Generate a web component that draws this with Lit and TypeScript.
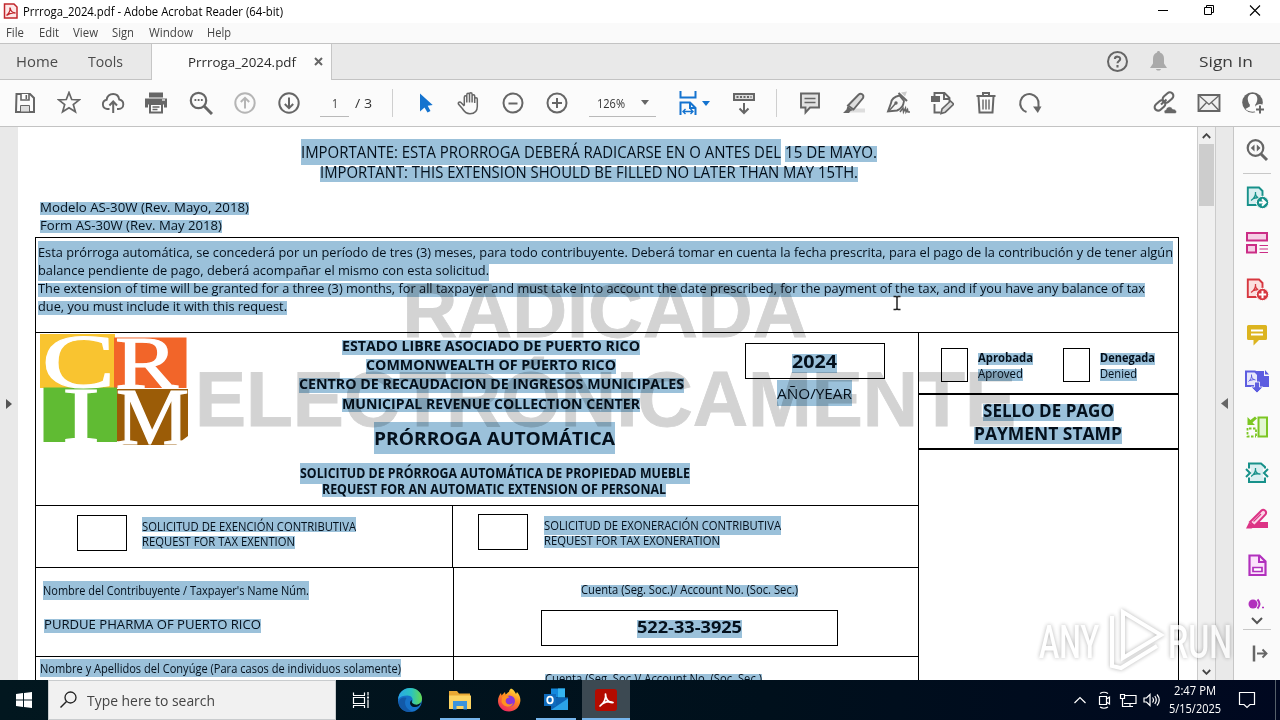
import { LitElement, html, svg, css } from "lit";
import { customElement } from "lit/decorators.js";
import { styleMap } from "lit/directives/style-map.js";

/** One line of text: page position, box size, baseline, font size, text. */
interface Line {
  x: number; y: number; w: number; h: number; b: number; s: number; t: string; bold?: boolean;
}
const L = (x: number, y: number, w: number, h: number, b: number, s: number, t: string, bold = false): Line =>
  ({ x, y, w, h, b, s, t, bold });

/** Text set to an exact width inside its own box. */
const fit = (w: number, h: number, base: number, size: number, text: string, cls = "") => html`
  <svg class="fit ${cls}" width=${w} height=${h}><text x="0" y=${base} font-size=${size} textLength=${w}
    lengthAdjust="spacingAndGlyphs">${text}</text></svg>`;

const run = (l: Line) => html`<div class="run">${fit(l.w, l.h, l.b - l.y, l.s, l.t, l.bold ? "bold" : "")}</div>`;

/** Lines flowing down a cell whose content box starts at (ox, oy). */
const stack = (ox: number, oy: number, lines: Line[]) => {
  let bottom = oy;
  return lines.map((l) => {
    const style = { marginLeft: `${l.x - ox}px`, marginTop: `${l.y - bottom}px`, width: `${l.w}px` };
    bottom = l.y + l.h;
    return html`<div style=${styleMap(style)}>${run(l)}</div>`;
  });
};

const icon = (body: unknown, size = 24) =>
  html`<svg class="icon" width=${size} height=${size} viewBox="0 0 ${size} ${size}">${body}</svg>`;

const G = "#666";
const I = {
  save: svg`<path d="M3.5 3H17l4 4v14H3z" fill="none" stroke="#666" stroke-width="2"/><path d="M8 3v6h8V3" fill="#fff" stroke="#666" stroke-width="1.6"/><path d="M12.5 4h1.6v4h-1.6z" fill="#666"/><path d="M7.5 14.5h9V21h-9z" fill="#ddd" stroke="#666" stroke-width="1"/>`,
  star: svg`<path d="M12 1.5l2.7 7 7.6.3-6 4.7 2.1 7.3L12 16.700l-6.400 4.100 2.100-7.300-6-4.700 7.600-.3z" fill="none" stroke="#666" stroke-width="1.700"/>`,
  cloud: svg`<path d="M8.500 18H6.200a4.700 4.700 0 0 1-.5-9.300C6.200 5 9 3 12.200 3c3.400 0 5.600 2.400 6 5.500 2.500.5 4.100 2.300 4.100 4.700 0 2.800-2 4.800-4.600 4.800H16" fill="none" stroke="#666" stroke-width="1.900"/><path d="M12.200 22V11M8.400 14.500l3.800-4 3.800 4" fill="none" stroke="#666" stroke-width="2"/>`,
  print: svg`<g transform="translate(-1 -.5)"><path d="M5 2h14v5H5zM1 8h22v9h-3v-3H4v3H1z" fill="#666"/><path d="M6 13.500h12V22H6z" fill="#fff" stroke="#666" stroke-width="2"/><path d="M8.500 16.500h7M8.500 19h5" stroke="#666" stroke-width="1.300"/><path d="M18 9.500h3" stroke="#fff" stroke-width="1.200"/></g>`,
  find: svg`<circle cx="9.500" cy="9.500" r="7.700" fill="none" stroke="#666" stroke-width="2.200"/><path d="M15 15l8 8" stroke="#666" stroke-width="3"/><path d="M5.500 9h1.800M8.700 9h1.800M11.900 9h1.800" stroke="#666" stroke-width="1.800"/>`,
  up: svg`<g fill="none" stroke="#b5b5b5" stroke-width="2"><circle cx="12" cy="12" r="9.700"/><path d="M12 17.500V7M7.800 11L12 6.800l4.200 4.200"/></g>`,
  down: svg`<g fill="none" stroke="#666" stroke-width="2"><circle cx="12" cy="12" r="9.700"/><path d="M12 6.500V17M7.800 13l4.200 4.200 4.200-4.200"/></g>`,
  pointer: svg`<path d="M7 2.500v18l4.500-4 3 5 3-1.500-2.800-5.300 5-.7z" fill="#1473cf"/>`,
  hand: svg`<path d="M7.300 14.500V6.300c0-2 2.500-2 2.500 0V4c0-2.300 2.700-2.300 2.700 0v-.7c0-2 2.600-2 2.600 0V5c0-1.800 2.600-1.800 2.600 0v3c0-1.700 2.600-1.700 2.600 0v7.500c0 4.500-2.500 7.200-7.300 7.200-4 0-5.800-2-7.700-5.200L1.600 13.300c-1-1.900 1.200-3 2.600-1.600l3.100 3.200M9.800 6v5.500M12.500 4v7.500M15.100 5v6.500M17.700 8v4" fill="none" stroke="#666" stroke-width="1.500"/>`,
  minus: svg`<g fill="none" stroke="#666" stroke-width="2"><circle cx="12" cy="12" r="9.500"/><path d="M7.500 12.500h9"/></g>`,
  plus: svg`<g fill="none" stroke="#666" stroke-width="2"><circle cx="12" cy="12" r="9.500"/><path d="M7 12h10M12 7v10"/></g>`,
  fitw: svg`<g fill="none" stroke="#1473cf" stroke-width="2"><path d="M4.500 0v6.500h15V0M4.500 24V11.500h9.500l5.500 5.500V24M14 11.500V17h5"/><path d="M7 20.500h10M9.500 18l-2.500 2.500L9.500 23M14.500 18l2.500 2.500-2.500 2.500" stroke-width="1.400"/></g>`,
  scroll: svg`<path d="M2 3H22V9H2z" fill="#ddd" stroke="#666" stroke-width="2"/><path d="M4.500 6h15" stroke="#666" stroke-width="2" stroke-dasharray="2 1.500"/><path d="M12 12v10M7.500 17.500l4.500 4.500 4.500-4.500" fill="none" stroke="#666" stroke-width="2"/>`,
  comment: svg`<path d="M3 2.500h18v14h-9l-4.500 5v-5H3z" fill="#e2e2e2" stroke="#666" stroke-width="1.900"/><path d="M6.500 7.500h11M6.500 11.500h11" stroke="#666" stroke-width="1.500"/>`,
  marker: svg`<path d="M8 17.500h15v4H4z" fill="#ddd"/><path d="M5.500 15l-1 3.500L1 22h6l1.500-2 2.500-.8z" fill="#666"/><path d="M6 14.500L16.500 3.800c2.300-2.200 6-.2 4.500 3.300L11.500 18.500z" fill="#ddd" stroke="#666" stroke-width="1.900"/>`,
  sign: svg`<path d="M15 1.500l6-1-2 5z" fill="#ccc"/><path d="M12.500 2l8.500 8" stroke="#666" stroke-width="2"/><path d="M13.500 4.500c-5 1-8 3-8.500 7.500L2 20.500l9-1c4-1.500 6.500-5 7-9.500z" fill="#f6f6f6" stroke="#666" stroke-width="1.900"/><path d="M2.500 20.500l7-8" stroke="#666" stroke-width="1.500"/><circle cx="10" cy="12" r="1.700" fill="#666"/><path d="M14 21l3-4 .5 4 2-4 .5 4 1.500-2.500.5 2.500h2" fill="none" stroke="#666" stroke-width="1.500"/>`,
  edit: svg`<path d="M1 5h9v6H1z" fill="#666"/><path d="M4.500 5V2h10l5 5v4M4.500 13v8.500h6M14 2v6h5" fill="none" stroke="#666" stroke-width="1.900"/><path d="M11 22.500l1-4.500 8.500-8 3.300 3.200-8.500 8z" fill="#ddd" stroke="#666" stroke-width="1.600"/>`,
  trash: svg`<path d="M2.500 5h19M9 5V2h6v3M4.500 5.500l1 16h13l1-16" fill="none" stroke="#666" stroke-width="2"/><path d="M9 8.500v10M12 8.500v10M15 8.500v10" stroke="#666" stroke-width="1.400"/>`,
  rotate: svg`<path d="M8.500 21A9.200 9.200 0 1 1 20.500 13.500v4" fill="none" stroke="#666" stroke-width="2"/><path d="M15 15.500h8.500l-3.700 6.500z" fill="#666"/>`,
  link: svg`<g fill="none" stroke="#666" stroke-width="2.100"><rect x="9" y="3" width="12" height="7" rx="3.500" transform="rotate(-42 15 6.500)"/><rect x="1" y="11" width="12" height="7" rx="3.500" transform="rotate(-42 7 14.500)"/><path d="M8 13.500l5.500-5"/></g><path d="M13 22.500c-2.500 0-2.500-3.500 0-3.700.5-3.500 5.500-4 6.500-.8 4-.3 5.500 4 2.500 4.500z" fill="#666" stroke="#fbfbfb" stroke-width=".5"/>`,
  mail: svg`<path d="M1.500 4h21v16h-21z" fill="#f0f0f0" stroke="#666" stroke-width="1.900"/><path d="M2 4.500l10 9 10-9M2 19.500l7.500-8M22 19.500l-7.500-8" fill="none" stroke="#666" stroke-width="1.300"/>`,
  user: svg`<circle cx="11.500" cy="11.500" r="10.300" fill="#666"/><path d="M11.500 3c-3 0-5 2-4.700 5.500.3 2.500 1 4 2 5v2l-4.500 2.500c4 3.500 10.500 3.500 14.500 0l-4.500-2.500v-2c1-1 1.700-2.500 2-5 .3-3.500-1.700-5.500-4.800-5.500z" fill="#fbfbfb"/><circle cx="19" cy="18.500" r="5.500" fill="#fbfbfb"/><path d="M19 14.500v8M15 18.500h8" stroke="#666" stroke-width="2"/>`,
  help: svg`<circle cx="12.500" cy="11.500" r="9.500" fill="none" stroke="#666" stroke-width="2"/><path d="M9.900 9c.2-3.200 5.400-3 5.300 0 0 2-2.700 2-2.700 4.300M12.500 15V17.500" fill="none" stroke="#666" stroke-width="2.100"/>`,
  bell: svg`<path d="M12.500 1c1 0 1.500.6 1.500 1.500C17 3.500 18 6 18 9v4.500L21 18H4l3-4.500V9c0-3 1-5.500 4-6.500C11 1.600 11.500 1 12.500 1zM10 19h5c-.5 2-4.500 2-5 0z" fill="#aaa"/>`,
};

const pdfGlyph = (c: string) => svg`<path d="M6 15.500c3-2 5-5 4.500-8.500M10.500 9c.5 3 2 4 5 4.200M7.500 14c2-1 5-1.500 7.500-1" fill="none" stroke="${c}" stroke-width="1.300"/>`;
const S = {
  view: svg`<circle cx="10.500" cy="10" r="7.800" fill="none" stroke="#666" stroke-width="2.200"/><path d="M16 16l6 6" stroke="#666" stroke-width="3"/><path d="M9.500 6.500v7L5.800 10zM11.800 6.500v7l3.700-3.500z" fill="#666"/>`,
  exp: svg`<path d="M2.800 2.500H14l3.500 3.500V20h-14.700z" fill="#d9eff1" stroke="#17918a" stroke-width="1.900"/>${pdfGlyph("#17918a")}<circle cx="17.500" cy="17.500" r="6.200" fill="#17918a" stroke="#fafafa"/><path d="M14 17.500h5M17 14.300l3.500 3.200-3.500 3.200" fill="none" stroke="#fff" stroke-width="1.900"/>`,
  org: svg`<g fill="#f6cfe6" stroke="#cb2d86" stroke-width="2"><path d="M2 2h20V9.500H2zM2 14h9V21.500H2z"/></g><path d="M14.500 14.500H23M14.500 18H23M14.500 21.500H23" stroke="#cb2d86" stroke-width="1.200"/>`,
  add: svg`<path d="M2.800 2.500H14l3.500 3.500V20h-14.700z" fill="#fbe0e0" stroke="#d7373f" stroke-width="1.900"/>${pdfGlyph("#d7373f")}<circle cx="17.500" cy="17.500" r="6.200" fill="#d7373f" stroke="#fafafa"/><path d="M13.800 17.500h7.400M17.500 13.800v7.400" stroke="#fff" stroke-width="2"/>`,
  note: svg`<path d="M3.500 2h17q1.500 0 1.500 1.500v12q0 1.500-1.500 1.500H14l-5.500 5.500V17h-5Q2 17 2 15.500v-12Q2 2 3.500 2z" fill="#dcb41f"/><path d="M6 7.500h12M6 11.500h12" stroke="#fff" stroke-width="1.800"/>`,
  comb: svg`<path d="M11 2h8v5h5v11H11z" fill="#5c5ce0"/><path d="M20 1l4 4.500h-4z" fill="#5c5ce0"/><path d="M1 2.500h9l3 3V17H1z" fill="#e6e6fb" stroke="#5c5ce0" stroke-width="2"/><path d="M3.500 12.500c2-1.500 3.500-4 3-7M6.500 7c.5 2.500 1.500 3.500 4 4M4.500 11.500l4.500-1" fill="none" stroke="#5c5ce0"/><path d="M9.500 13h5v5H18l-6 6-6-6h3.500z" fill="#5c5ce0" stroke="#fafafa" stroke-width=".8"/>`,
  compare: svg`<path d="M13.500 2.500h8.500v19h-8.500z" fill="#e2f6d0" stroke="#7cc623" stroke-width="2"/><path d="M2.500 13v8.500h8.500M4 13.500h7v8" fill="none" stroke="#7cc623" stroke-width="1.800" stroke-dasharray="2.500 1.500"/><path d="M2.500 2v8H10L7.500 7.500 12 3.500 10 1.500 5.500 5z" fill="#7cc623"/>`,
  compress: svg`<path d="M4 2.500h12L20 6v15H4z" fill="#d9eff1" stroke="#17918a" stroke-width="2"/><path d="M0 7.500h6v9H0zM18 7.500h6v9h-6z" fill="#fafafa"/><path d="M1 8l4 4-4 4M23 8l-4 4 4 4" fill="none" stroke="#17918a" stroke-width="2"/>${pdfGlyph("#17918a")}`,
  redact: svg`<path d="M11 15h12v6H6z" fill="#dc3485"/><path d="M1 21.500l3-6 6 4-3.500 2z" fill="#dc3485"/><path d="M5 15L16.500 3.500c2-2 6 .5 4 4L9.500 19z" fill="#fbd6e8" stroke="#dc3485" stroke-width="2"/><path d="M8.500 14.500L16 7" stroke="#dc3485" stroke-width="1.300"/>`,
  form: svg`<path d="M4.500 2.500h10l6 6V22h-16z" fill="#fbe2fb" stroke="#b130bd" stroke-width="2.200"/><path d="M14 3v6h6" fill="none" stroke="#b130bd" stroke-width="2"/><path d="M8 14.500h9v4H8z" fill="#fff" stroke="#b130bd" stroke-width="1.700"/>`,
  more: svg`<circle cx="8" cy="14" r="4.500" fill="#b130bd"/><path d="M12.500 9.500q4 4.500 0 9" fill="none" stroke="#b130bd" stroke-width="2"/><path d="M17 17.500h2" stroke="#b130bd" stroke-width="1.500"/>`,
};

const T = {
  edge: svg`<defs><linearGradient id="eg" x1="0" y1="0" x2="1" y2="0"><stop offset="0" stop-color="#2aa7e6"/><stop offset=".55" stop-color="#2bc3c0"/><stop offset="1" stop-color="#66d94f"/></linearGradient></defs><circle cx="13" cy="13" r="12" fill="#1672c9"/><path d="M1.200 12C2 5 7 1 13 1c7 0 12 5 12 10.500 0 4-3 6.500-6.500 6.500-3 0-4-1.500-3.500-2.500 2-3.500-.5-7-4.500-7S3 9.500 1.200 12z" fill="url(#eg)"/><path d="M9.500 11c-4 6 1 13 6.500 13.500-7 2-14-2-14.500-9 .5-4 5-6 8-4.500z" fill="#1259a8"/><path d="M15 13c-.5 1.500-.5 3.500 3 4.500 2.500.5 4.500-.5 6-2-1 3.500-4 5-7 4.500-4-.5-5.500-5-2-7z" fill="#021520"/>`,
  folder: svg`<path d="M2 4h8l2 2.500h11V22H2z" fill="#e9a934"/><path d="M2 8.500h22V22H2z" fill="#fcd462"/><path d="M6 14h14v8.500h-3.500V19h-7v3.500H6z" fill="#3b94dc"/>`,
  firefox: svg`<defs><linearGradient id="ff" x1=".8" y1="0" x2=".3" y2="1"><stop offset="0" stop-color="#ffe43f"/><stop offset=".45" stop-color="#ff8a1f"/><stop offset="1" stop-color="#ef2561"/></linearGradient></defs><path d="M15 1.500c3 1 4 3.500 5 5.500l1-2c3 3 3.800 7 3.200 10C23 21 18.500 24.500 13 24.500 6.500 24.500 2 19.500 2 14c0-3.500 1.500-6 3-8l.5 2.500L9 5l.5 2.500c2-1 2-2.500 3.500-2.500 0-1.500 1-2.500 2-3.500z" fill="url(#ff)"/><circle cx="13.500" cy="14" r="5.500" fill="#8b36d8"/><path d="M6 10c3-2 6-1.500 7.500.5-3 0-4.500 2-3.500 5 1.500 2.500 5 2.500 7 .5-1 5-9.500 5-11.500-1z" fill="#ff9220"/>`,
  outlook: svg`<path d="M8 1.500h14v9H8z" fill="#1389dd"/><path d="M15 1.500h7v9h-7z" fill="#35b5f1"/><path d="M8 10.500h17V23H8z" fill="#0c64b5"/><path d="M8 23l17-11.500V23z" fill="#2ba3e8"/><path d="M1 7h12v12H1z" fill="#0f6cbd"/><ellipse cx="7" cy="13" rx="2.800" ry="3.300" fill="none" stroke="#fff" stroke-width="1.800"/>`,
  acrobat: svg`<rect x="2" y="2" width="22" height="22" rx="3" fill="#b30b00"/><path d="M7 19c3.500-2 6.500-7.500 5.500-12 0 4.500 2.500 9 7.500 8.500-4-1.500-9-.5-12.500 3z" fill="none" stroke="#fff" stroke-width="1.700" stroke-linejoin="round"/>`,
};

const introLines = [
  L(320, 167, 538, 15, 178.300, 15.500, "IMPORTANT: THIS EXTENSION SHOULD BE FILLED NO LATER THAN MAY 15TH."),
  L(40, 202, 209, 13, 212.300, 12.800, "Modelo AS-30W (Rev. Mayo, 2018)"),
  L(40, 220, 182, 13, 230.300, 12.800, "Form AS-30W (Rev. May 2018)"),
];
const noteLines = [
  L(38, 241, 1135, 23, 257.300, 12.800, "Esta prórroga automática, se concederá por un período de tres (3) meses, para todo contribuyente. Deberá tomar en cuenta la fecha prescrita, para el pago de la contribución y de tener algún"),
  L(38, 264, 451, 17, 275.300, 12.800, "balance pendiente de pago, deberá acompañar el mismo con esta solicitud."),
  L(38, 283, 1107, 14, 293.300, 12.800, "The extension of time will be granted for a three (3) months, for all taxpayer and must take into account the date prescribed, for the payment of the tax, and if you have any balance of tax"),
  L(38, 301, 249, 14, 311.300, 12.800, "due, you must include it with this request."),
];
const titleLines = [
  L(342, 340, 298, 15, 351, 13.800, "ESTADO LIBRE ASOCIADO DE PUERTO RICO", true),
  L(366, 359, 250, 15, 370.300, 13.800, "COMMONWEALTH OF PUERTO RICO", true),
  L(299, 378, 385, 15, 389, 13.800, "CENTRO DE RECAUDACION DE INGRESOS MUNICIPALES", true),
  L(342, 398, 298, 14, 409, 13.800, "MUNICIPAL REVENUE COLLECTION CENTER", true),
  L(374, 422, 241, 32, 445, 18.500, "PRÓRROGA AUTOMÁTICA", true),
  L(300, 463, 390, 21, 478, 13.300, "SOLICITUD DE PRÓRROGA AUTOMÁTICA DE PROPIEDAD MUEBLE", true),
  L(322, 484, 344, 13, 493.700, 13.300, "REQUEST FOR AN AUTOMATIC EXTENSION OF PERSONAL", true),
];

const menus: [string, number, number][] = [
  ["File", 18, 15], ["Edit", 20, 14], ["View", 25, 14], ["Sign", 22, 15], ["Window", 44, 14], ["Help", 24, 0],
];

@customElement("app-root")
export class AppRoot extends LitElement {
  static styles = css`
    :host { display: block; width: 1280px; height: 720px; overflow: hidden; font-family: "Open Sans", "Noto Sans", sans-serif; color: #000; }
    * { box-sizing: border-box; }
    svg { display: block; flex: none; }
    .fit { overflow: visible; }
    .fit text { fill: currentColor; }
    .bold text { font-weight: 700; }
    .screen { position: relative; display: flex; flex-direction: column; height: 720px; }
    .titlebar { display: flex; height: 23px; background: #fff; align-items: flex-start; padding: 0 0 0 3px; }
    .appicon { padding-top: 3px; width: 20px; }
    .grow { flex: 1; }
    .wctl { display: flex; padding: 5px 19px 0 0; gap: 34px; }
    .menubar { display: flex; height: 20px; padding-left: 6px; background: #fafafa; color: #444; }
    .tabs { display: flex; height: 37px; border-top: 1px solid #c3c3c3; border-bottom: 1px solid #c3c3c3; background: #e9e9e9; color: #4b4b4b; }
    .nav { display: flex; gap: 30px; width: 152px; padding-left: 16px; border-right: 1px solid #c6c6c6; }
    .tab { display: flex; width: 180px; margin-bottom: -1px; background: #fcfcfc; border-right: 1px solid #c6c6c6; padding-left: 36px; gap: 18px; color: #2b2b2b; }
    .account { display: flex; align-items: center; gap: 17px; padding-right: 27px; color: #3a3a3a; }
    .account .fit { margin-left: 12px; }
    .tabx { padding-top: 13px; }
    .toolbar { display: flex; align-items: center; height: 47px; background: #fbfbfb; border-bottom: 1px solid #c3c3c3; padding: 0 5px 0 3px; color: #333; }
    .btn { display: flex; width: 44px; justify-content: center; }
    .pageno { display: flex; margin-left: 9px; width: 52px; height: 27px; gap: 6px; }
    .field { width: 29px; border-bottom: 1px solid #b9b9b9; padding-left: 12px; }
    .sep { width: 1px; height: 28px; background: #cfcfcf; }
    .sep.a { margin: 0 10px 0 20px; }
    .sep.b { margin: 0 11px 0 10px; }
    .zoomf { display: flex; align-items: center; justify-content: space-between; width: 67px; height: 27px; margin: 0 10px; padding: 0 7px 0 8px; border-bottom: 1px solid #b9b9b9; }
    .fitbtn { display: flex; align-items: center; width: 56px; padding-left: 10px; gap: 2px; }
    .main { display: flex; height: 553px; background: #e9e9e9; }
    .gutter { display: flex; align-items: center; width: 18px; padding-left: 5px; }
    .page { position: relative; width: 1179px; height: 553px; overflow: hidden; background: #fff; }
    .run { background: #9bc1da; color: #04101c; }
    .intro { height: 110px; }
    .deadline { display: flex; gap: 4px; padding: 12px 0 0 283px; align-items: flex-start; height: 40px; }
    .second { margin-top: 7px; }
    .form { width: 1144px; height: 460px; margin-left: 17px; border: 1px solid #000; border-bottom: 0; }
    .note { display: flow-root; height: 95px; border-bottom: 1px solid #000; }
    .body { display: flex; height: 360px; }
    .left { width: 882px; flex: none; }
    .right { flex: 1; min-width: 0; border-left: 1px solid #000; }
    .head { display: flex; height: 173px; border-bottom: 1px solid #000; }
    .logo { width: 153px; padding: 1px 0 0 4px; }
    .logo svg { overflow: visible; }
    .titles { width: 520px; }
    .year { width: 209px; padding: 10px 0 0 36px; }
    .box { border: 1px solid #000; }
    .yearbox { width: 140px; height: 36px; }
    .exempt { display: flex; height: 62px; border-bottom: 1px solid #000; }
    .e1 { display: flex; width: 416px; padding: 9px 0 0 41px; gap: 15px; }
    .e2 { display: flex; flex: 1; border-left: 1px solid #000; padding: 8px 0 0 25px; gap: 16px; }
    .check { width: 50px; height: 36px; }
    .payer { display: flex; height: 89px; border-bottom: 1px solid #000; }
    .p1 { width: 417px; }
    .p2 { flex: 1; border-left: 1px solid #000; }
    .ssn { width: 297px; height: 36px; margin: 13px 0 0 87px; }
    .spouse { display: flex; height: 40px; }
    .verdict { display: flex; height: 62px; border-bottom: 2px solid #000; padding: 15px 0 0 22px; }
    .vbox { flex: none; width: 27px; height: 34px; margin-right: 10px; }
    .vtext { flex: none; width: 85px; }
    .vtext.last { width: 70px; }
    .stamp { display: flow-root; height: 55px; border-bottom: 2px solid #000; }
    .mark { position: absolute; left: 0; top: 0; mix-blend-mode: multiply; pointer-events: none; font-family: "Liberation Sans", sans-serif; font-weight: 700; fill: #d3d3d3; }
    .mark text { stroke: #d3d3d3; stroke-width: .8px; }
    .ibeam { position: absolute; left: 873px; top: 168px; }
    .scroll { display: flex; flex-direction: column; align-items: center; justify-content: space-between; width: 19px; background: #f0f0f0; border-left: 1px solid #cbcbcb; border-right: 1px solid #cbcbcb; padding-bottom: 5px; }
    .thumb { width: 15px; height: 62px; background: #cdcdcd; }
    .arrow { display: flex; height: 17px; align-items: center; justify-content: center; }
    .collapse { display: flex; align-items: center; justify-content: center; width: 17px; }
    .side { display: flex; flex-direction: column; align-items: center; width: 47px; background: #fafafa; border-left: 1px solid #c6c6c6; }
    .cell { display: flex; align-items: center; justify-content: center; height: 46px; flex: none; }
    .cell.cut { height: 24px; align-items: flex-start; overflow: hidden; }
    .rule { width: 28px; height: 1px; background: #c8c8c8; flex: none; }
    .taskbar { display: flex; height: 40px; background: linear-gradient(90deg, #02171f, #00101c 60%, #000820); color: #fff; }
    .start { display: flex; align-items: center; justify-content: center; width: 48px; }
    .search { display: flex; align-items: center; width: 288px; background: #f1f1f1; border: 1px solid #c9ccce; padding-left: 9px; color: #444; gap: 8px; }
    .task { display: flex; align-items: center; justify-content: center; width: 49px; }
    .open { box-shadow: inset 0 -2px #76b5ec; width: 40px; margin: 0 4px 0 6px; }
    .open.late { margin: 0 4px 0 3px; }
    .task.active { width: 48px; background: #3c4952; box-shadow: inset 0 -2px #76b5ec; margin-left: 2px; }
    .tray { display: flex; align-items: center; gap: 4px; margin-right: 1px; }
    .more { margin-right: 2px; }
    .clock { width: 56px; display: flex; flex-direction: column; align-items: center; padding-top: 3px; margin-left: 4px; }
    .bell { width: 48px; display: flex; justify-content: center; margin-right: 4px; }
    .peek { width: 5px; border-left: 1px solid #55606a; }
    .brand { position: absolute; left: 1032px; top: 604px; overflow: visible; filter: drop-shadow(0 0 2px rgba(0, 0, 0, .4)); font-family: Roboto, sans-serif; font-weight: 500; opacity: .75; }
  `;

  private btn(b: unknown) { return html`<div class="btn">${icon(b)}</div>`; }

  private caret(c: string) { return html`<svg width="8" height="5"><path d="M0 0h8L4 5z" fill=${c} /></svg>`; }

  private chrome() {
    return html`
      <div class="titlebar">
        <div class="appicon"><svg width="15" height="16"><path d="M1.500 1h9.500l3 3v11H1.500z" fill="#fde8e8" stroke="#c1272d" stroke-width="1.500"/><path d="M3.500 12.500c2-1.500 4-5 3.500-8 .5 3 2 5.500 5.500 5.500-3-.5-6 0-9 2.500z" fill="none" stroke="#c1272d" stroke-width="1.400"/></svg></div>
        ${fit(260, 22, 15.800, 12, "Prrroga_2024.pdf - Adobe Acrobat Reader (64-bit)")}
        <div class="grow"></div>
        <div class="wctl">
          <svg width="12" height="12"><path d="M1 5.500h10" stroke="#000"/></svg>
          <svg width="12" height="12" fill="none" stroke="#000"><path d="M1.500 2.500h7v7h-7zM3.500 2V.5h7v7H9"/></svg>
          <svg width="12" height="12"><path d="M1 .5l10 10M11 .5L1 10.500" stroke="#000" stroke-width="1.100"/></svg>
        </div>
      </div>
      <div class="menubar">${menus.map(([t, w, g]) => html`<div style=${styleMap({ marginRight: `${g}px` })}>${fit(w, 20, 14, 12, t)}</div>`)}</div>
      <div class="tabs">
        <div class="nav">${fit(42, 35, 23, 14.500, "Home")}${fit(35, 35, 23, 14.500, "Tools")}</div>
        <div class="tab">${fit(108, 35, 23, 13.500, "Prrroga_2024.pdf")}<div class="tabx"><svg width="9" height="9"><path d="M1 1l7 7M8 1L1 8" stroke="#666" stroke-width="2"/></svg></div></div>
        <div class="grow"></div>
        <div class="account">${icon(I.help)}${icon(I.bell)}${fit(54, 35, 23, 14.500, "Sign In")}</div>
      </div>
      <div class="toolbar">
        ${[I.save, I.star, I.cloud, I.print, I.find, I.up, I.down].map((b) => this.btn(b))}
        <div class="pageno"><div class="field">${fit(6, 26, 17.500, 12.500, "1")}</div>${fit(17, 26, 17.500, 12.500, "/  3")}</div>
        <div class="sep a"></div>
        ${[I.pointer, I.hand, I.minus, I.plus].map((b) => this.btn(b))}
        <div class="zoomf">${fit(28, 26, 17.500, 12, "126%")}${this.caret(G)}</div>
        <div class="fitbtn">${icon(I.fitw)}${this.caret("#1473cf")}</div>
        ${this.btn(I.scroll)}
        <div class="sep b"></div>
        ${[I.comment, I.marker, I.sign, I.edit, I.trash, I.rotate].map((b) => this.btn(b))}
        <div class="grow"></div>
        ${[I.link, I.mail, I.user].map((b) => this.btn(b))}
      </div>`;
  }

  private logo() {
    return html`<svg width="149" height="112" font-family="Liberation Serif, serif" fill="#fff">
      <path d="M0 0h75v54H0z" fill="#f9c430"/><path d="M74 3.500h72.500V54H74z" fill="#f26529"/>
      <path d="M3.500 53.500H77V108H3.500z" fill="#60bb33"/><path d="M77 55h71v47l-12 9H84l-7-4z" fill="#9b5c07"/>
      <g stroke="#fff" stroke-width="1.200">
      <text x="2" y="52.500" font-size="76" textLength="73" lengthAdjust="spacingAndGlyphs">C</text>
      <text x="75" y="53.500" font-size="75" textLength="63" lengthAdjust="spacingAndGlyphs">R</text>
      <text x="22" y="106.500" font-size="78" textLength="38" lengthAdjust="spacingAndGlyphs">I</text>
      <text x="76" y="110" font-size="80" textLength="73" lengthAdjust="spacingAndGlyphs">M</text></g></svg>`;
  }

  private page() {
    return html`<div class="page">
      <div class="intro">
        <div class="deadline">
          ${run(L(301, 139, 480, 26, 158.300, 15.500, "IMPORTANTE: ESTA PRORROGA DEBERÁ RADICARSE EN O ANTES DEL"))}
          <div class="second">${run(L(785, 146, 92, 16, 158.300, 15.500, "15 DE MAYO."))}</div>
        </div>
        ${stack(18, 167, introLines)}
      </div>
      <div class="form">
        <div class="note">${stack(36, 238, noteLines)}</div>
        <div class="body">
          <div class="left">
            <div class="head">
              <div class="logo">${this.logo()}</div>
              <div class="titles">${stack(189, 333, titleLines)}</div>
              <div class="year"><div class="box yearbox">${stack(746, 344, [L(792, 354, 45, 19, 368.300, 18.500, "2024", true)])}</div>
                ${stack(745, 379, [L(777, 380, 75, 26, 399, 15, "AÑO/YEAR")])}</div>
            </div>
            <div class="exempt">
              <div class="e1"><div class="box check"></div><div>${stack(142, 515, [L(142, 517, 214, 15, 531, 12.500, "SOLICITUD DE EXENCIÓN CONTRIBUTIVA"), L(142, 536, 153, 13, 546, 12.500, "REQUEST FOR TAX EXENTION")])}</div></div>
              <div class="e2"><div class="box check"></div><div>${stack(544, 514, [L(544, 516, 237, 19, 530, 12.500, "SOLICITUD DE EXONERACIÓN CONTRIBUTIVA"), L(544, 536, 176, 12, 545.300, 12.500, "REQUEST FOR TAX EXONERATION")])}</div></div>
            </div>
            <div class="payer">
              <div class="p1">${stack(36, 568, [L(43, 581, 266, 19, 595, 12.500, "Nombre del Contribuyente / Taxpayer's Name Núm."), L(44, 619, 217, 14, 629, 13, "PURDUE PHARMA OF PUERTO RICO")])}</div>
              <div class="p2">${stack(454, 568, [L(581, 585, 217, 12, 594, 12.500, "Cuenta (Seg. Soc.)/ Account No. (Soc. Sec.)")])}
                <div class="box ssn">${stack(542, 611, [L(637, 620, 105, 18, 633, 16, "522-33-3925", true)])}</div></div>
            </div>
            <div class="spouse">
              <div class="p1">${stack(36, 657, [L(40, 659, 361, 18, 673, 12.500, "Nombre y Apellidos del Conyúge (Para casos de individuos solamente)")])}</div>
              <div class="p2">${stack(454, 657, [L(545, 674, 217, 14, 683, 12.500, "Cuenta (Seg. Soc.)/ Account No. (Soc. Sec.)")])}</div>
            </div>
          </div>
          <div class="right">
            <div class="verdict">
              <div class="box vbox"></div>
              <div class="vtext">${stack(978, 348, [L(978, 353, 55, 12, 362, 11.500, "Aprobada", true), L(978, 369, 45, 12, 378.300, 11.800, "Aproved")])}</div>
              <div class="box vbox"></div>
              <div class="vtext last">${stack(1100, 348, [L(1100, 353, 55, 12, 362, 11.500, "Denegada", true), L(1100, 369, 37, 12, 378.300, 11.800, "Denied")])}</div>
            </div>
            <div class="stamp">${stack(919, 395, [L(983, 404, 131, 17, 417, 17, "SELLO DE PAGO", true), L(974, 427, 148, 17, 440, 17, "PAYMENT STAMP", true)])}</div>
          </div>
        </div>
      </div>
      <svg class="mark" width="1179" height="553">
        <text x="384.500" y="210" font-size="75.500" textLength="405" lengthAdjust="spacingAndGlyphs">RADICADA</text>
        <text x="177" y="299" font-size="78.500" textLength="821" lengthAdjust="spacingAndGlyphs">ELECTRÓNICAMENTE</text>
      </svg>
      <svg class="ibeam" width="12" height="16"><path d="M2.500 1.500H5l1 1 1-1h2.500M6 2v12M2.500 14.500H5l1-1 1 1h2.500" fill="none" stroke="#222" stroke-width="1.500"/></svg>
    </div>`;
  }

  private side() {
    return html`<div class="side">
      <div class="cell">${icon(S.view)}</div><div class="rule"></div>
      ${[S.exp, S.org, S.add, S.note, S.comb, S.compare, S.compress, S.redact, S.form].map((b) => html`<div class="cell">${icon(b)}</div>`)}
      <div class="cell cut"><svg width="24" height="24" viewBox="0 -2 24 24">${S.more}</svg></div>
      <svg width="12" height="17"><path d="M1 6l5 5 5-5" fill="none" stroke="#555" stroke-width="2"/></svg>
      <div class="rule"></div>
      <div class="cell">${icon(svg`<path d="M9 4.500v16" stroke="#666" stroke-width="2.500"/><path d="M12 12.500h9M17.500 8.500l4 4-4 4" fill="none" stroke="#666" stroke-width="1.900"/>`)}</div>
    </div>`;
  }

  private taskbar() {
    return html`<div class="taskbar">
      <div class="start"><svg width="16" height="16" fill="#fff"><path d="M0 2l7-1v6.500H0zM8 .9L16 0v7.500H8zM0 8.500h7V15l-7-1zM8 8.500h8V16l-8-1z"/></svg></div>
      <div class="search">
        <svg width="21" height="20"><circle cx="12.500" cy="7.500" r="5.500" fill="none" stroke="#222" stroke-width="1.300"/><path d="M8.500 11.500L2.500 17.500" stroke="#222" stroke-width="1.400"/></svg>
        ${fit(128, 38, 25, 14.500, "Type here to search")}
      </div>
      <div class="task"><svg width="18" height="18" fill="none" stroke="#fff" stroke-width="1.200"><path d="M1.500 4V1.500M12.500 4V1.500M1 4.500h12M1.500 6.500h11v6h-11zM1 14.500h12M1.500 14.500V17M12.500 14.500V17M16 1v16" /><path d="M14.500 5h3v3h-3z" fill="#fff" stroke="#021520"/></svg></div>
      <div class="task">${icon(T.edge, 26)}</div>
      <div class="task open">${icon(T.folder, 26)}</div>
      <div class="task">${icon(T.firefox, 26)}</div>
      <div class="task open late">${icon(T.outlook, 26)}</div>
      <div class="task active">${icon(T.acrobat, 26)}</div>
      <div class="grow"></div>
      <div class="tray">
        <svg class="more" width="16" height="16" fill="none" stroke="#fff" stroke-width="1.200"><path d="M2.500 11L8 5.500l5.500 5.500"/></svg>
        <svg width="20" height="18" fill="none" stroke="#fff" stroke-width="1.200"><path d="M5.500 5.500h7v8h-7zM12.500 8l3-2v7l-3-2M6 2.500q4-2.500 8 0M6 16q4 2.500 8 0"/></svg>
        <svg width="20" height="18" fill="none" stroke="#fff" stroke-width="1.200"><path d="M6 4.500h12v8H6M12 12.500v3M8 15.500h7M2.500 3.500h4v4h-4zM4.500 8v7.500H8"/></svg>
        <svg width="20" height="18" fill="none" stroke="#fff" stroke-width="1.200"><path d="M2 7h2.500L8 3.500v11L4.500 11H2zM10.500 6.500q2 2.500 0 5M12.800 5q3 4 0 8M15 3.500q4.500 5.500 0 11"/></svg>
      </div>
      <div class="clock">${fit(42, 18, 12, 12, "2:47 PM")}${fit(52, 18, 12, 12, "5/15/2025")}</div>
      <div class="bell"><svg width="18" height="40" fill="none" stroke="#fff" stroke-width="1.200"><path d="M1.500 12.500h15v12h-4.500l-3 3-3-3h-4.500z"/></svg></div>
      <div class="peek"></div>
    </div>`;
  }

  render() {
    return html`<div class="screen">
      ${this.chrome()}
      <div class="main">
        <div class="gutter"><svg width="7" height="10"><path d="M1 0v10l6-5z" fill="#555"/></svg></div>
        ${this.page()}
        <div class="scroll">
          <div><div class="arrow"><svg width="9" height="6"><path d="M.8 5l3.700-3.800L8.200 5" fill="none" stroke="#444" stroke-width="1.800"/></svg></div><div class="thumb"></div></div>
          <svg width="9" height="6"><path d="M.8 1l3.700 3.800L8.200 1" fill="none" stroke="#444" stroke-width="1.800"/></svg>
        </div>
        <div class="collapse"><svg width="7" height="11"><path d="M7 0v11L0 5.500z" fill="#666"/></svg></div>
        ${this.side()}
      </div>
      ${this.taskbar()}
      <svg class="brand" width="210" height="74" fill="#fff">
        <text x="7" y="54" font-size="46" textLength="60" lengthAdjust="spacingAndGlyphs">ANY</text>
        <text x="136" y="54" font-size="46" textLength="64" lengthAdjust="spacingAndGlyphs">RUN</text>
        <g fill="none" stroke="#fff" stroke-width="4"><path d="M91 8v46l38-23z"/><path d="M80 12v50l9 2 36-22"/></g>
      </svg>
    </div>`;
  }
}
